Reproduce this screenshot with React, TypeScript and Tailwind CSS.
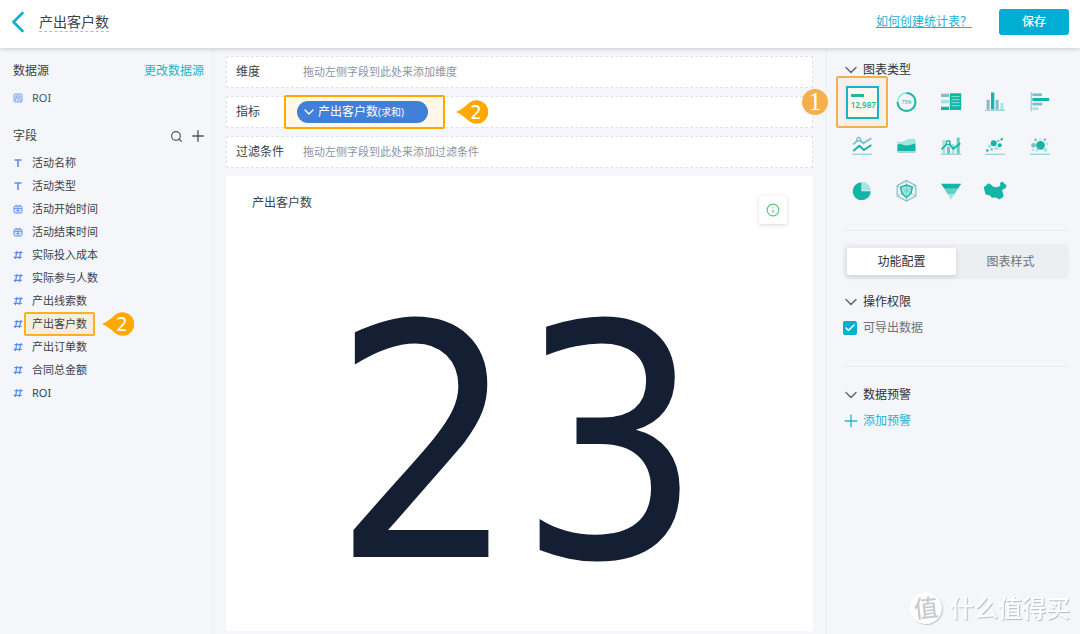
import React, { useState } from "react";
import clsx from "clsx";
import { Check, ChevronDown, ChevronLeft, Info, Plus, Search } from "lucide-react";

type FieldType = "text" | "date" | "number";

const fields: { name: string; type: FieldType; marked?: boolean }[] = [
  { name: "活动名称", type: "text" },
  { name: "活动类型", type: "text" },
  { name: "活动开始时间", type: "date" },
  { name: "活动结束时间", type: "date" },
  { name: "实际投入成本", type: "number" },
  { name: "实际参与人数", type: "number" },
  { name: "产出线索数", type: "number" },
  { name: "产出客户数", type: "number", marked: true },
  { name: "产出订单数", type: "number" },
  { name: "合同总金额", type: "number" },
  { name: "ROI", type: "number" },
];

const TEAL = "#12b5a6";
const MINT = "#a0e8df";
const MID = "#66cfc4";
const SLATE = "#7dbfc9";

function FieldIcon({ type }: { type: FieldType }) {
  return (
    <svg className="size-2.5 shrink-0" viewBox="0 0 10 10" fill="none" stroke="#5b8def">
      {type === "text" && <path d="M1.5 2H8.5M5 2V9" strokeWidth="1.6" />}
      {type === "date" && (
        <>
          <rect x="1" y="2" width="8" height="7" rx="1.5" fill="#dbe5fc" />
          <path d="M1 4.5H9M3.2 0.8V3M6.8 0.8V3M5 3V8M3.2 6.5H6.8" strokeWidth="0.8" />
        </>
      )}
      {type === "number" && <path d="M4.1 1L2.3 9M8 1L6.2 9M1.4 2.6H9.6M0.6 7.4H8.8" strokeWidth="1.2" />}
    </svg>
  );
}

// Orange drop with its tip on the left
function Pointer({ label, className }: { label: string; className?: string }) {
  return (
    <span className={clsx("absolute flex h-6 w-8 items-center justify-end", className)}>
      <svg className="absolute inset-0" width="32" height="24" viewBox="0 0 32 24">
        <path d="M0 12C6 9.5 10 5.5 13.5 2.5A11.8 11.8 0 1 1 13.5 21.5C10 18.5 6 14.5 0 12Z" fill="#ffa900" />
      </svg>
      <span className="relative w-6 text-center font-['DejaVu_Sans_Condensed','DejaVu_Sans',sans-serif] text-xl leading-[22px] text-white">
        {label}
      </span>
    </span>
  );
}

const baseLine = <path d="M2 20.3H22" stroke="#9fd0d8" strokeWidth="1.3" />;

const chartIcons: { name: string; icon: React.ReactNode }[] = [
  {
    name: "进度环",
    icon: (
      <>
        <circle cx="11.5" cy="12" r="9" fill="none" stroke={MINT} strokeWidth="1.8" />
        <path d="M11.5 3A9 9 0 1 1 2.5 12" fill="none" stroke={TEAL} strokeWidth="1.9" />
        <text x="11.5" y="14" fontSize="5" textAnchor="middle" fill={TEAL}>75%</text>
      </>
    ),
  },
  {
    name: "表格",
    icon: (
      <>
        <rect x="2" y="3.7" width="8" height="3.3" fill={SLATE} />
        <rect x="2" y="10" width="8" height="3.3" fill={MINT} />
        <rect x="2" y="16.7" width="8" height="3.3" fill={TEAL} />
        <rect x="10.8" y="3.3" width="11.4" height="16.7" fill={TEAL} />
        <path d="M12.5 6.7H20.5M12.5 9.7H20.5M12.5 12.7H20.5M12.5 15.7H20.5" stroke={MINT} strokeWidth="0.9" />
      </>
    ),
  },
  {
    name: "柱状图",
    icon: (
      <>
        <rect x="3.6" y="9.7" width="3" height="10" fill={SLATE} />
        <rect x="8" y="2.5" width="3.3" height="17" fill={TEAL} />
        <rect x="12.6" y="9.7" width="3" height="10" fill={SLATE} />
        <rect x="17.5" y="13" width="2.9" height="7" fill={MINT} />
        {baseLine}
      </>
    ),
  },
  {
    name: "条形图",
    icon: (
      <>
        <path d="M3.3 2V21.3" stroke="#9fd0d8" strokeWidth="1.3" />
        <rect x="4.4" y="3.4" width="9.6" height="2.7" fill={SLATE} />
        <rect x="4.4" y="8" width="16.8" height="3" fill={TEAL} />
        <rect x="4.4" y="12.7" width="9.8" height="2.7" fill={SLATE} />
        <rect x="4.4" y="17.3" width="5.8" height="2.7" fill={MINT} />
      </>
    ),
  },
  {
    name: "折线图",
    icon: (
      <>
        <path d="M3.3 10.3L8.7 5.3L13.3 9.3L21.3 4.3" fill="none" stroke={SLATE} strokeWidth="1.8" />
        <circle cx="8.7" cy="5.3" r="1.8" fill="#f4f6f9" stroke={SLATE} strokeWidth="1.4" />
        <path d="M3.3 17L9.3 11.8L14 16L21.3 11" fill="none" stroke={TEAL} strokeWidth="2.1" />
        {baseLine}
      </>
    ),
  },
  {
    name: "面积图",
    icon: (
      <>
        <path d="M2.4 7C6 9 8 7.5 11 6S17 4.5 20.4 5V17H2.4Z" fill={MINT} />
        <path d="M2.4 10.5C6 9 8 11 11 11.5S17 10 20.4 9.5V17.3H2.4Z" fill={TEAL} />
        <rect x="2.4" y="17.3" width="18" height="1.6" fill="#9fd0d8" />
      </>
    ),
  },
  {
    name: "组合图",
    icon: (
      <>
        <rect x="3.3" y="6" width="3" height="14" fill={MINT} />
        <rect x="8" y="12.7" width="3" height="7.3" fill={SLATE} />
        <rect x="12.7" y="10" width="2.8" height="10" fill={MINT} />
        <rect x="17.7" y="3.7" width="3" height="16.3" fill={MID} />
        <path d="M2.5 15.3L9.2 8.7L14.3 14.7L21.3 9.3" fill="none" stroke={TEAL} strokeWidth="1.8" />
        <circle cx="9.2" cy="8.7" r="1.9" fill="#f4f6f9" stroke={TEAL} strokeWidth="1.4" />
        {baseLine}
      </>
    ),
  },
  {
    name: "散点图",
    icon: (
      <>
        <circle cx="10.7" cy="9.3" r="3" fill={TEAL} />
        <circle cx="16.7" cy="11.3" r="2" fill={TEAL} />
        <circle cx="15.3" cy="6.9" r="1.2" fill={SLATE} />
        <circle cx="18.7" cy="5.3" r="1.2" fill={TEAL} />
        <circle cx="6.4" cy="12.3" r="1.7" fill={MINT} />
        <circle cx="13.4" cy="14.3" r="2" fill={MINT} />
        <circle cx="8.7" cy="15.4" r="1.3" fill={SLATE} />
        <circle cx="4.3" cy="16.5" r="1.2" fill={TEAL} />
        {baseLine}
      </>
    ),
  },
  {
    name: "气泡图",
    icon: (
      <>
        <circle cx="12.5" cy="11.3" r="4.4" fill={TEAL} />
        <circle cx="5.5" cy="11.3" r="2.4" fill={SLATE} />
        <circle cx="7.5" cy="5.8" r="1.4" fill={SLATE} />
        <circle cx="12.2" cy="5.4" r="1" fill={MINT} />
        <circle cx="16.9" cy="5.8" r="1.4" fill={SLATE} />
        <circle cx="19.2" cy="9.7" r="1.3" fill={MINT} />
        <circle cx="17.5" cy="15.8" r="2" fill={MINT} />
        <circle cx="4.9" cy="15.9" r="1.2" fill={MINT} />
        <circle cx="8.9" cy="16.4" r="1.3" fill={MINT} />
        {baseLine}
      </>
    ),
  },
  {
    name: "饼图",
    icon: (
      <>
        <path d="M11.5 4.2A9 9 0 1 0 20.7 13.2H11.5Z" fill={TEAL} />
        <path d="M12.2 4A8.6 8.6 0 0 1 20.8 12.4H12.2Z" fill={MINT} />
      </>
    ),
  },
  {
    name: "雷达图",
    icon: (
      <>
        <path d="M11.5 2.5L20.8 7.6V18L11.5 23L2.2 18V7.6Z" fill="none" stroke={SLATE} strokeWidth="1.2" />
        <path d="M11.5 2.5V23M2.2 7.6L20.8 18M20.8 7.6L2.2 18" stroke={SLATE} strokeWidth="0.7" />
        <path d="M11.5 7L17.3 9.2L16 15.5L11.5 19.5L7 15.5L5.5 9.2Z" fill={MINT} stroke={TEAL} strokeWidth="1.4" />
        <path d="M11.5 8V19M7.5 10.5L15.5 15M15.5 10.5L7.5 15" stroke={MID} strokeWidth="0.7" />
      </>
    ),
  },
  {
    name: "漏斗图",
    icon: (
      <>
        <path d="M2 5.7H22.2L18.9 10.8H5.3Z" fill={TEAL} />
        <path d="M5.3 10.8H18.9L15.6 16H8.6Z" fill={MID} />
        <path d="M8.6 16H15.6L12.1 21.7Z" fill={MINT} />
      </>
    ),
  },
  {
    name: "地图",
    icon: (
      <path
        d="M0.7 9.2L3.3 7.2L5.3 5.2L8 6.4L9.4 8.2L12.5 9.2L15.8 8.8L17.4 7L17 5.6L18 4L20.2 4L21.5 6L23.7 7L22.7 10L20.5 11.2L19 12.3L20.2 15.6L20.5 18.4L18 20.6L16 21.4L15.2 20.6L12.4 19.6L8.8 19.8L7 17.6L2.6 16.4L1.7 13.4Z"
        fill={TEAL}
      />
    ),
  },
];

function SectionTitle({ children }: { children: React.ReactNode }) {
  return (
    <button type="button" className="flex h-5 items-center text-xs text-[#2b323b]">
      <ChevronDown className="mr-0.5 -ml-0.5 size-5 text-[#59616b]" strokeWidth={1.6} />
      {children}
    </button>
  );
}

function DropRow({ label, hint, children }: { label: string; hint?: string; children?: React.ReactNode }) {
  return (
    <div className="flex h-8 items-center border border-dashed border-[#dfe2e7] bg-white pl-[9px]">
      <span className="w-[67px] shrink-0 text-xs text-[#3a424d]">{label}</span>
      {hint && <span className="text-[11px] text-[#8d949e]">{hint}</span>}
      {children}
    </div>
  );
}

function Header() {
  return (
    <header className="relative flex h-12 items-center bg-white pr-[11px] pb-1 shadow-[0_1px_5px_rgba(0,0,0,0.18)]">
      <button type="button" aria-label="返回" className="text-[#10b1d3]">
        <ChevronLeft className="size-9" strokeWidth={1.8} />
      </button>
      <h1 className="ml-[3px] border-b border-dashed border-[#b5bac2] text-sm leading-[19px] text-[#3a424d]">
        产出客户数
      </h1>
      <a href="#help" className="mr-[27px] ml-auto text-xs text-[#1fb0d2] underline underline-offset-1">
        如何创建统计表？
      </a>
      <button type="button" className="h-[26px] w-[70px] rounded-[3px] bg-[#00aed3] text-xs font-medium text-white">
        保存
      </button>
    </header>
  );
}

function Sidebar() {
  return (
    <aside className="w-[213px] shrink-0 border-r border-[#eceef1] pt-[13px] pr-2 pl-[13px]">
      <div className="flex h-5 items-center justify-between text-xs">
        <h2 className="text-[#3a424d]">数据源</h2>
        <a href="#source" className="text-[#25b2d3]">更改数据源</a>
      </div>
      <div className="mt-[7px] flex h-5 items-center gap-[9px] text-[11px] text-[#4c545f]">
        <svg className="size-2.5" viewBox="0 0 10 10" fill="none" stroke="#7da2f2">
          <rect x="1" y="1" width="8" height="8" rx="1" fill="#dbe5fc" />
          <path d="M3 3H7V5H3ZM2.5 7.5V5.5M5 5.5V8M7 6L8 8.5" strokeWidth="0.9" />
        </svg>
        ROI
      </div>
      <div className="mt-[18px] flex h-5 items-center text-[#4c545f]">
        <h2 className="mr-auto text-xs text-[#3a424d]">字段</h2>
        <button type="button" aria-label="搜索字段" className="mr-1.5">
          <Search className="size-[13px]" strokeWidth={2.2} />
        </button>
        <button type="button" aria-label="添加字段" className="-mr-[3px]">
          <Plus className="size-[18px]" strokeWidth={1.8} />
        </button>
      </div>
      <ul className="mt-[5px] text-[11px] text-[#3a424d]">
        {fields.map((f) => (
          <li key={f.name} className="flex h-[23px] items-center gap-[9px]">
            <FieldIcon type={f.type} />
            <span className="relative leading-4">
              {f.marked && (
                <span className="absolute -inset-x-2 -inset-y-1 rounded-[2px] border-2 border-[#ffb020] bg-[#ffa900]/10" />
              )}
              <span className="relative">{f.name}</span>
              {f.marked && <Pointer label="2" className="-top-1 left-full ml-[15px]" />}
            </span>
          </li>
        ))}
      </ul>
    </aside>
  );
}

function Canvas() {
  return (
    <main className="flex min-w-0 flex-1 flex-col px-[13px] pt-2 pb-[3px]">
      <div className="flex flex-col gap-2">
        <DropRow label="维度" hint="拖动左侧字段到此处来添加维度" />
        <DropRow label="指标">
          <div className="relative -ml-1.5">
            <span className="absolute -inset-y-1.5 -right-[17px] -left-[13px] rounded-[2px] border-2 border-[#ffa900] bg-[#fff7e8]" />
            <button
              type="button"
              className="relative flex h-[22px] w-[131px] items-center gap-px rounded-full bg-[#4080d8] pl-1 text-xs text-white"
            >
              <ChevronDown className="size-4" strokeWidth={2} />
              <span>
                产出客户数<span className="text-[10px]">(求和)</span>
              </span>
            </button>
            <Pointer label="2" className="-top-px left-full ml-7" />
          </div>
        </DropRow>
        <DropRow label="过滤条件" hint="拖动左侧字段到此处来添加过滤条件" />
      </div>

      <section className="mt-2 flex flex-1 flex-col bg-white">
        <div className="flex items-start justify-between px-[26px] pt-5">
          <h2 className="text-xs leading-[14px] text-[#3a424d]">产出客户数</h2>
          <button
            type="button"
            aria-label="说明"
            className="flex size-7 items-center justify-center rounded-[2px] bg-white text-[#5cc47c] shadow-[0_1px_4px_rgba(60,40,90,0.2)]"
          >
            <Info className="size-[14px]" strokeWidth={2} />
          </button>
        </div>
        <div className="flex flex-1 items-center justify-center pt-9 pr-1 font-['DejaVu_Sans_Condensed','DejaVu_Sans',sans-serif] text-[324px] leading-[1.1] text-[#141f33]">
          23
        </div>
      </section>
    </main>
  );
}

function ConfigPanel() {
  const [chart, setChart] = useState("指标卡");
  const [tab, setTab] = useState("功能配置");
  const [canExport, setCanExport] = useState(true);

  return (
    <aside className="w-[254px] shrink-0 border-l border-[#eceef1] pt-3 pr-[11px] pl-4">
      <SectionTitle>图表类型</SectionTitle>
      <div className="mr-[7px] -ml-[3px] grid grid-cols-5">
        <div className="relative flex h-11 items-center justify-center">
          <span className="absolute -inset-1 rounded-[2px] border-2 border-[#f5b04e] bg-[#f6f0e9]" />
          <button
            type="button"
            onClick={() => setChart("指标卡")}
            className="relative flex size-[33px] flex-col justify-center gap-0.5 border-2 border-[#1fb0c8] bg-[#fdf8ef] pl-[3px] shadow-[0_0_0_2px_#e6efe9]"
          >
            <span className="h-[3px] w-[13px] bg-[#25b5a0]" />
            <span className="text-left text-[8px] leading-[11px] font-semibold text-[#25b5a0]">12,987</span>
          </button>
          <span className="absolute right-full mr-3 flex size-[26px] items-center justify-center rounded-full bg-[#f5b04e] font-['Liberation_Serif',serif] text-[26px] leading-none text-white">
            1
          </span>
        </div>
        {chartIcons.map(({ name, icon }) => (
          <button
            key={name}
            type="button"
            aria-label={name}
            aria-pressed={chart === name}
            onClick={() => setChart(name)}
            className="flex h-11 items-center justify-center"
          >
            <svg className="size-6" viewBox="0 0 24 24">{icon}</svg>
          </button>
        ))}
      </div>

      <hr className="mt-[18px] border-[#e9ebef]" />

      <div className="mt-[13px] flex h-[35px] rounded-md bg-[#eceef2] p-1 text-xs">
        {["功能配置", "图表样式"].map((t) => (
          <button
            key={t}
            type="button"
            onClick={() => setTab(t)}
            className={clsx(
              "flex-1 rounded-[2px]",
              tab === t ? "bg-white text-[#2b323b] shadow-[0_2px_5px_rgba(0,0,0,0.12)]" : "text-[#6b727c]"
            )}
          >
            {t}
          </button>
        ))}
      </div>

      <div className="mt-[13px]">
        <SectionTitle>操作权限</SectionTitle>
        <label className="mt-1.5 flex h-5 items-center gap-1.5 text-xs text-[#6b727c]">
          <span className="relative flex size-[14px]">
            <input
              type="checkbox"
              checked={canExport}
              onChange={(e) => setCanExport(e.target.checked)}
              className="peer size-[14px] appearance-none rounded-[2px] border border-[#00aed3] checked:bg-[#00aed3]"
            />
            <Check
              className="pointer-events-none absolute inset-0 m-auto hidden size-3 text-white peer-checked:block"
              strokeWidth={3}
            />
          </span>
          可导出数据
        </label>
      </div>

      <hr className="mt-7 border-[#e9ebef]" />

      <div className="mt-[18px]">
        <SectionTitle>数据预警</SectionTitle>
        <button type="button" className="mt-1.5 flex h-5 items-center text-xs text-[#25b2d3]">
          <Plus className="mr-0.5 -ml-0.5 size-5" strokeWidth={1.6} />
          添加预警
        </button>
      </div>
    </aside>
  );
}

function Watermark() {
  return (
    <div className="pointer-events-none fixed right-2.5 bottom-2.5 flex items-center gap-2 text-2xl leading-8 text-white">
      <span className="flex size-8 items-center justify-center rounded-full bg-white text-[#c9cbce] shadow-[1px_1px_1px_#c4c6c9]">
        <span className="-rotate-6 font-medium">值</span>
      </span>
      <span className="font-medium [text-shadow:1px_1px_1px_#b9bbbe]">什么值得买</span>
    </div>
  );
}

export default function App() {
  return (
    <div className="flex min-h-screen flex-col bg-[#f4f6f9] font-['Noto_Sans','Noto_Sans_CJK_SC',sans-serif]">
      <Header />
      <div className="flex flex-1">
        <Sidebar />
        <Canvas />
        <ConfigPanel />
      </div>
      <Watermark />
    </div>
  );
}
